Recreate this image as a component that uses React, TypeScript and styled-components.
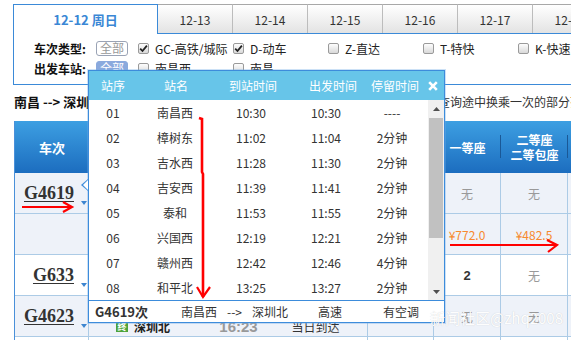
import React from 'react';
import styled, { createGlobalStyle, css } from 'styled-components';

const FONT = `"Noto Sans CJK SC", "Liberation Sans", sans-serif`;

const GlobalStyle = createGlobalStyle`
  *, *::before, *::after { box-sizing: border-box; }
  html, body { margin: 0; padding: 0; background: #fff; overflow: hidden; }
  body { font-family: ${FONT}; font-size: 12px; color: #333; }
  #root { width: 571px; height: 340px; overflow: hidden; }
`;

const Page = styled.div`
  position: relative;
  width: 780px;
  height: 340px;
  padding: 4px 0 0 13px;
`;

/* ---------- tabs ---------- */
const TabBar = styled.div`
  display: flex;
  height: 30px;
  border-bottom: 1px solid #3b8ad8;
`;

const Tab = styled.div<{ $active?: boolean }>`
  flex: none;
  width: 75px;
  display: flex;
  align-items: center;
  justify-content: center;
  border-top: 1px solid #a8a8a8;
  border-right: 1px solid #bcbcbc;
  background: linear-gradient(#ffffff, #e3e3e3);
  font-size: 12px;
  color: #333;
  white-space: nowrap;
  ${p =>
    p.$active &&
    css`
      position: relative;
      z-index: 1;
      width: 145px;
      height: 30px;
      align-self: flex-start;
      border: 1px solid #3b8ad8;
      border-bottom: none;
      background: #fff;
      color: #3a87d5;
      font-size: 13px;
      font-weight: bold;
    `}
`;

/* ---------- filters ---------- */
const FilterBox = styled.div`
  display: flex;
  flex-direction: column;
  padding: 4px 0 6px 20px;
  border-left: 1px solid #3b8ad8;
  border-bottom: 1px solid #3b8ad8;
`;

const FilterRow = styled.div`
  display: flex;
  align-items: center;
  height: 20px;
`;

const FilterLabel = styled.div`
  width: 62px;
  font-weight: bold;
  color: #111;
  white-space: nowrap;
`;

const AllButton = styled.div<{ $on?: boolean }>`
  width: 32px;
  height: 15px;
  margin-right: 10px;
  display: flex;
  align-items: center;
  justify-content: center;
  border: 1px solid #9aa3b5;
  border-radius: 3px;
  background: #fff;
  color: #999;
  font-size: 12px;
  line-height: 1;
  ${p =>
    p.$on &&
    css`
      background: #8aa9dd;
      border-color: #8aa9dd;
      color: #fff;
    `}
`;

const CheckItem = styled.label`
  width: 95px;
  flex: none;
  display: flex;
  align-items: center;
  gap: 6px;
  white-space: nowrap;
  color: #222;
`;

const CheckBox = styled.span`
  width: 11px;
  height: 11px;
  flex: none;
  display: flex;
  align-items: center;
  justify-content: center;
  border: 1px solid #9a9a9a;
  border-radius: 2px;
  background: linear-gradient(#fdfdfd, #d9d9d9);
`;

/* ---------- info line ---------- */
const InfoLine = styled.div`
  display: flex;
  align-items: center;
  height: 36px;
  padding-bottom: 4px;
  white-space: nowrap;
`;

const RouteText = styled.div`
  width: 280px;
  margin-left: 1px;
  overflow: hidden;
  font-size: 13px;
  font-weight: bold;
  color: #111;
`;

const HintText = styled.div`
  font-size: 12px;
  color: #333;
`;

/* ---------- table ---------- */
const COLS = '74px 112px 75px 92px 66px 67px 67px 90px';

const Table = styled.div`
  margin-left: 1px;
  border-left: 1px solid #4a90d9;
`;

const HeaderRow = styled.div`
  display: grid;
  grid-template-columns: ${COLS};
  height: 52px;
  background: linear-gradient(#3d9fe2, #1c6dbf);
`;

const HeaderCell = styled.div<{ $divider?: boolean; $big?: boolean }>`
  position: relative;
  display: flex;
  flex-direction: column;
  align-items: center;
  justify-content: center;
  color: #fff;
  font-weight: bold;
  font-size: ${p => (p.$big ? '13px' : '12px')};
  line-height: 15px;
  white-space: nowrap;
  ${p =>
    p.$divider &&
    css`
      &::after {
        content: '';
        position: absolute;
        right: 0;
        top: 14px;
        bottom: 15px;
        width: 1px;
        background: #1a5896;
      }
    `}
`;

const BodyRow = styled.div<{ $tone: 'light' | 'white' }>`
  display: grid;
  grid-template-columns: ${COLS};
  height: 41px;
  background: ${p => (p.$tone === 'light' ? '#eef2f9' : '#ffffff')};
`;

const Cell = styled.div<{ $line?: boolean }>`
  display: flex;
  align-items: center;
  justify-content: center;
  border-bottom: 1px solid #accbe6;
  border-right: ${p => (p.$line ? '1px solid #accbe6' : 'none')};
  white-space: nowrap;
`;

const TrainCell = styled(Cell)<{ $expand?: boolean }>`
  position: relative;
  justify-content: flex-end;
  padding-right: 14px;
  ${p =>
    p.$expand &&
    css`
      &::after {
        content: '';
        position: absolute;
        right: 1px;
        top: 28px;
        border-left: 3px solid transparent;
        border-right: 3px solid transparent;
        border-top: 4px solid #3d85d0;
      }
    `}
`;

const TrainNo = styled.span`
  font-family: 'Liberation Serif', serif;
  font-weight: bold;
  font-size: 18px;
  line-height: 1;
  color: #333;
  text-decoration: underline;
  text-underline-offset: 2px;
`;

const StackCell = styled(Cell)<{ $align?: 'start' | 'center' }>`
  flex-direction: column;
  align-items: ${p => (p.$align === 'start' ? 'flex-start' : 'center')};
  justify-content: center;
  padding-left: ${p => (p.$align === 'start' ? '27px' : '0')};
`;

const StackLine = styled.div`
  height: 20px;
  display: flex;
  align-items: center;
  gap: 6px;
`;

const StationIcon = styled.span<{ $color: string }>`
  width: 12px;
  height: 12px;
  display: inline-flex;
  align-items: center;
  justify-content: center;
  background: ${p => p.$color};
  color: #fff;
  font-size: 9px;
  font-weight: bold;
  line-height: 1;
`;

const StationName = styled.span`
  font-weight: bold;
  color: #222;
`;

const TimeText = styled.span<{ $muted?: boolean }>`
  font-family: 'Liberation Sans', sans-serif;
  font-weight: bold;
  font-size: 15px;
  color: ${p => (p.$muted ? '#999' : '#333')};
`;

const DurationCell = styled(StackCell)`
  padding-right: 12px;
`;

const SeatText = styled.span<{ $kind?: 'none' | 'count' | 'price' }>`
  font-size: ${p => (p.$kind === 'count' ? '13px' : '12px')};
  font-weight: ${p => (p.$kind === 'count' ? 'bold' : 'normal')};
  font-family: ${p => (p.$kind === 'count' ? `'Liberation Sans', sans-serif` : FONT)};
  color: ${p => (p.$kind === 'price' ? '#f7892e' : p.$kind === 'count' ? '#333' : '#999')};
`;

/* ---------- popup ---------- */
const Popup = styled.div`
  position: absolute;
  left: 88px;
  top: 70px;
  width: 357px;
  height: 253px;
  z-index: 5;
  display: flex;
  flex-direction: column;
  background: #fff;
  border: 1px solid #3d8cdb;
  box-shadow: 0 0 0 1px rgba(110, 170, 230, 0.35);
`;

const Notch = styled.div`
  position: absolute;
  left: -8px;
  top: 108px;
  width: 0;
  height: 0;
  border-top: 6px solid transparent;
  border-bottom: 6px solid transparent;
  border-right: 7px solid #3d8cdb;
  &::after {
    content: '';
    position: absolute;
    top: -5px;
    left: 2px;
    border-top: 5px solid transparent;
    border-bottom: 5px solid transparent;
    border-right: 5px solid #fff;
  }
`;

const PopupHeader = styled.div`
  flex: none;
  display: grid;
  grid-template-columns: 48px 78px 76px 84px 40px 1fr;
  align-items: center;
  height: 29px;
  background: #67c5e9;
  color: #fff;
  font-size: 12px;
`;

const HeadCell = styled.div`
  display: flex;
  justify-content: center;
  white-space: nowrap;
`;

const CloseBtn = styled.div`
  display: flex;
  justify-content: center;
  padding-left: 6px;
`;

const PopupBody = styled.div`
  flex: none;
  display: flex;
  height: 200px;
`;

const StopList = styled.div`
  width: 339px;
`;

const StopRow = styled.div`
  display: grid;
  grid-template-columns: 48px 76px 76px 74px 58px;
  align-items: center;
  justify-items: center;
  height: 25px;
  color: #333;
  white-space: nowrap;
`;

const Scrollbar = styled.div`
  width: 16px;
  display: flex;
  flex-direction: column;
  background: #f0f0f0;
`;

const ScrollArrow = styled.div`
  height: 17px;
  flex: none;
  display: flex;
  align-items: center;
  justify-content: center;
`;

const ScrollThumb = styled.div`
  height: 120px;
  margin: 1px 1px 0 1px;
  background: #c1c1c1;
`;

const ScrollTrack = styled.div`
  flex: 1;
`;

const PopupFooter = styled.div`
  flex: 1;
  display: grid;
  grid-template-columns: 86px 137px 65px 1fr;
  align-items: center;
  padding-left: 6px;
  border-top: 1px solid #3d8cdb;
  color: #333;
  white-space: nowrap;
`;

const FooterTrain = styled.span`
  font-size: 13px;
  font-weight: bold;
`;

const FooterRoute = styled.span`
  display: flex;
  gap: 10px;
`;

/* ---------- overlays ---------- */
const Annotations = styled.svg`
  position: absolute;
  left: 0;
  top: 0;
  z-index: 10;
  pointer-events: none;
`;

const Watermark = styled.div`
  position: absolute;
  left: 430px;
  top: 307px;
  z-index: 11;
  font-size: 15px;
  color: rgba(255, 255, 255, 0.97);
  text-shadow: 0 0 1px rgba(150, 150, 150, 0.45);
  white-space: nowrap;
  pointer-events: none;
`;

/* ---------- data ---------- */
const tabs = ['12-12 周日', '12-13', '12-14', '12-15', '12-16', '12-17', '12-18', '12-19'];

const types = [
  { label: 'GC-高铁/城际', checked: true },
  { label: 'D-动车', checked: true },
  { label: 'Z-直达', checked: false },
  { label: 'T-特快', checked: false },
  { label: 'K-快速', checked: false },
];

const stations = ['南昌西', '南昌'];

const stops = [
  ['01', '南昌西', '10:30', '10:30', '----'],
  ['02', '樟树东', '11:02', '11:04', '2分钟'],
  ['03', '吉水西', '11:28', '11:30', '2分钟'],
  ['04', '吉安西', '11:39', '11:41', '2分钟'],
  ['05', '泰和', '11:53', '11:55', '2分钟'],
  ['06', '兴国西', '12:19', '12:21', '2分钟'],
  ['07', '赣州西', '12:42', '12:46', '4分钟'],
  ['08', '和平北', '13:25', '13:27', '2分钟'],
];

type Seat = { text: string; kind: 'none' | 'count' | 'price' };
type Row = {
  tone: 'light' | 'white';
  train?: string;
  trip?: { from: string; to: string; dep: string; arr: string; dur: string };
  first?: Seat;
  second?: Seat;
};

const rows: Row[] = [
  {
    tone: 'light', train: 'G4619',
    first: { text: '无', kind: 'none' }, second: { text: '无', kind: 'none' },
  },
  { tone: 'light', first: { text: '¥772.0', kind: 'price' }, second: { text: '¥482.5', kind: 'price' } },
  {
    tone: 'white', train: 'G633',
    first: { text: '2', kind: 'count' }, second: { text: '无', kind: 'none' },
  },
  {
    tone: 'light', train: 'G4623',
    trip: { from: '南昌西', to: '深圳北', dep: '11:10', arr: '16:23', dur: '05:13' },
    first: { text: '无', kind: 'none' }, second: { text: '无', kind: 'none' },
  },
  { tone: 'white' },
];

const CheckMark = () => (
  <svg width="9" height="9" viewBox="0 0 9 9">
    <path d="M1.2 4.6 L3.5 7 L7.9 1.6" fill="none" stroke="#222" strokeWidth="1.8" />
  </svg>
);

export default function App() {
  return (
    <>
      <GlobalStyle />
      <Page>
        <TabBar>
          {tabs.map((t, i) => (
            <Tab key={t} $active={i === 0}>
              {t}
            </Tab>
          ))}
        </TabBar>

        <FilterBox>
          <FilterRow>
            <FilterLabel>车次类型:</FilterLabel>
            <AllButton>全部</AllButton>
            {types.map(t => (
              <CheckItem key={t.label}>
                <CheckBox>{t.checked && <CheckMark />}</CheckBox>
                {t.label}
              </CheckItem>
            ))}
          </FilterRow>
          <FilterRow>
            <FilterLabel>出发车站:</FilterLabel>
            <AllButton $on>全部</AllButton>
            {stations.map(s => (
              <CheckItem key={s}>
                <CheckBox />
                {s}
              </CheckItem>
            ))}
          </FilterRow>
        </FilterBox>

        <InfoLine>
          <RouteText>南昌 --&gt; 深圳北（12月12日 周日）共计15个车次</RouteText>
          <HintText>您可以使用接续换乘功能，查询途中换乘一次的部分列车余票情况。</HintText>
        </InfoLine>

        <Table>
          <HeaderRow>
            <HeaderCell $big>车次</HeaderCell>
            <HeaderCell>出发站<br />到达站</HeaderCell>
            <HeaderCell>出发时间<br />到达时间</HeaderCell>
            <HeaderCell $divider>历时</HeaderCell>
            <HeaderCell $divider>商务座</HeaderCell>
            <HeaderCell $divider>一等座</HeaderCell>
            <HeaderCell $divider>
              <span>二等座</span>
              <span>二等包座</span>
            </HeaderCell>
            <HeaderCell>高级软卧</HeaderCell>
          </HeaderRow>

          {rows.map((r, i) => (
            <BodyRow key={i} $tone={r.tone}>
              <TrainCell $line $expand={!!r.train}>
                {r.train && <TrainNo>{r.train}</TrainNo>}
              </TrainCell>
              <StackCell $align="start">
                {r.trip && (
                  <>
                    <StackLine>
                      <StationIcon $color="#f08a24">始</StationIcon>
                      <StationName>{r.trip.from}</StationName>
                    </StackLine>
                    <StackLine>
                      <StationIcon $color="#4da33a">终</StationIcon>
                      <StationName>{r.trip.to}</StationName>
                    </StackLine>
                  </>
                )}
              </StackCell>
              <StackCell>
                {r.trip && (
                  <>
                    <StackLine><TimeText>{r.trip.dep}</TimeText></StackLine>
                    <StackLine><TimeText $muted>{r.trip.arr}</TimeText></StackLine>
                  </>
                )}
              </StackCell>
              <DurationCell $line>
                {r.trip && (
                  <>
                    <StackLine>{r.trip.dur}</StackLine>
                    <StackLine>当日到达</StackLine>
                  </>
                )}
              </DurationCell>
              <Cell $line />
              <Cell $line>{r.first && <SeatText $kind={r.first.kind}>{r.first.text}</SeatText>}</Cell>
              <Cell $line>{r.second && <SeatText $kind={r.second.kind}>{r.second.text}</SeatText>}</Cell>
              <Cell $line />
            </BodyRow>
          ))}
        </Table>

        <Popup>
          <Notch />
          <PopupHeader>
            <HeadCell>站序</HeadCell>
            <HeadCell>站名</HeadCell>
            <HeadCell>到站时间</HeadCell>
            <HeadCell>出发时间</HeadCell>
            <HeadCell>停留时间</HeadCell>
            <CloseBtn>
              <svg width="10" height="10" viewBox="0 0 10 10">
                <path d="M1.2 1.2 L8.8 8.8 M8.8 1.2 L1.2 8.8" stroke="#fff" strokeWidth="2.6" />
              </svg>
            </CloseBtn>
          </PopupHeader>
          <PopupBody>
            <StopList>
              {stops.map(s => (
                <StopRow key={s[0]}>
                  {s.map((v, j) => (
                    <span key={j}>{v}</span>
                  ))}
                </StopRow>
              ))}
            </StopList>
            <Scrollbar>
              <ScrollArrow>
                <svg width="7" height="4" viewBox="0 0 7 4">
                  <polygon points="0,4 3.5,0 7,4" fill="#505050" />
                </svg>
              </ScrollArrow>
              <ScrollThumb />
              <ScrollTrack />
              <ScrollArrow>
                <svg width="7" height="4" viewBox="0 0 7 4">
                  <polygon points="0,0 3.5,4 7,0" fill="#505050" />
                </svg>
              </ScrollArrow>
            </Scrollbar>
          </PopupBody>
          <PopupFooter>
            <FooterTrain>G4619次</FooterTrain>
            <FooterRoute>
              <span>南昌西</span>
              <span>--&gt;</span>
              <span>深圳北</span>
            </FooterRoute>
            <span>高速</span>
            <span>有空调</span>
          </PopupFooter>
        </Popup>

        <Annotations width="571" height="340" viewBox="0 0 571 340">
          <g fill="none" stroke="#ff0000" strokeWidth="2.2" strokeLinejoin="miter">
            <path d="M22 207 L72 207 M63 202 L72 207 L63 212" />
            <path d="M199 118 L202 119 L202 172 L203 174 L203 297" strokeWidth="2.6" />
            <path d="M197 287 L203 297 L210 287" />
            <path d="M450 245 L557 245 M547 240 L557 245 L548 252" />
          </g>
        </Annotations>

        <Watermark>新闻社区@zhq2008</Watermark>
      </Page>
    </>
  );
}
